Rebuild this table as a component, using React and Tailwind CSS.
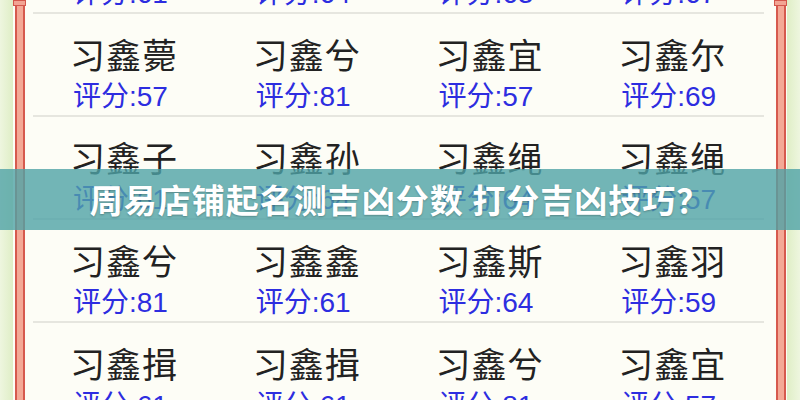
import React from "react";

const rows = [
  [["习鑫宜", 61], ["习鑫兮", 64], ["习鑫尔", 63], ["习鑫子", 67]],
  [["习鑫薨", 57], ["习鑫兮", 81], ["习鑫宜", 57], ["习鑫尔", 69]],
  [["习鑫子", 61], ["习鑫孙", 64], ["习鑫绳", 64], ["习鑫绳", 57]],
  [["习鑫兮", 81], ["习鑫鑫", 61], ["习鑫斯", 64], ["习鑫羽", 59]],
  [["习鑫揖", 61], ["习鑫揖", 61], ["习鑫兮", 81], ["习鑫宜", 57]],
];

const Pole = () => (
  <div className="flex flex-col items-center w-[13px] shrink-0">
    <div className="w-[13px] h-[6px] border border-[#d4574c] bg-[#f2a493]" />
    <div className="w-[10px] flex-1 border-x-2 border-[#d65a4e] bg-[#f4a996]" />
  </div>
);

const App = () => {
  return (
    <div className="relative w-[800px] h-[400px] overflow-hidden flex bg-[#fdfdf6]">
      {/* left edge */}
      <div className="w-[13px] shrink-0 bg-gradient-to-r from-[#eef6df] to-[#dfeec6]" />
      <Pole />

      {/* table */}
      <div className="flex-1 bg-[#fdfdf6] pl-[7px] pr-[10px]">
        <div className="mt-[-89px]">
          {rows.map((row, i) => (
            <div key={i}>
              <div className="grid grid-cols-4 h-[101px]">
                {row.map(([name, score], j) => (
                  <div key={j} className="pl-[37px] pt-[22px]">
                    <div
                      className="text-[35px] leading-none text-[#222] whitespace-nowrap tracking-[1px]"
                      style={{ fontFamily: '"Noto Sans CJK SC", sans-serif' }}
                    >
                      {name}
                    </div>
                    <div
                      className="mt-[12px] pl-[3px] text-[28px] leading-none text-[#2d2de0] whitespace-nowrap"
                      style={{ fontFamily: '"Liberation Sans", "Noto Sans CJK SC", sans-serif' }}
                    >
                      评分:{score}
                    </div>
                  </div>
                ))}
              </div>
              <div className="h-[2px] bg-[#e6e6df]" />
            </div>
          ))}
        </div>
      </div>

      <Pole />
      {/* right edge */}
      <div className="w-[13px] shrink-0 bg-gradient-to-r from-[#dfeec6] to-[#eef6df]" />

      {/* title banner */}
      <div className="absolute left-0 right-0 top-[169px] h-[61px] bg-[#4fa3a6]/80 flex items-center justify-center">
        <span
          className="text-[33px] font-bold text-white leading-none whitespace-nowrap tracking-[1px] [text-shadow:0_1px_2px_rgba(0,0,0,0.25)]"
          style={{ fontFamily: '"Noto Sans CJK SC", sans-serif' }}
        >
          周易店铺起名测吉凶分数 打分吉凶技巧？
        </span>
      </div>
    </div>
  );
};

export default App;
